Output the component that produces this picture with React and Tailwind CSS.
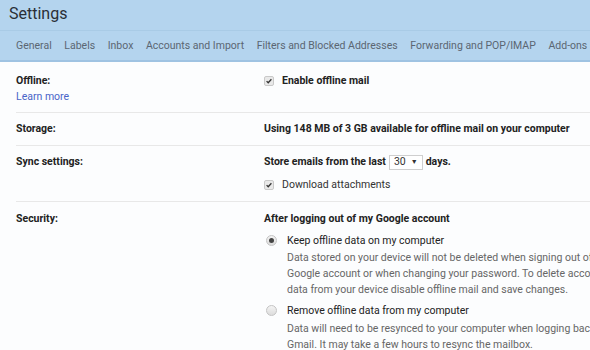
const tabs = [
  'General',
  'Labels',
  'Inbox',
  'Accounts and Import',
  'Filters and Blocked Addresses',
  'Forwarding and POP/IMAP',
  'Add-ons',
];

function Checkbox() {
  return (
    <span className="flex h-[10px] w-[10px] shrink-0 items-center justify-center rounded-[2px] border border-[#c9c9c9] bg-[#e9e9e9]">
      <svg viewBox="0 0 10 10" className="h-[8px] w-[8px]">
        <path d="M2 5.2 L4 7.2 L8 2.8" fill="none" stroke="#333" strokeWidth="1.6" />
      </svg>
    </span>
  );
}

function Radio({ checked }) {
  return (
    <span className="flex h-[11px] w-[11px] shrink-0 items-center justify-center rounded-full border border-[#c4c4c4] bg-gradient-to-b from-[#f4f4f4] to-[#dcdcdc]">
      {checked && <span className="h-[5px] w-[5px] rounded-full bg-[#444]" />}
    </span>
  );
}

function Row({ label, extra, children, className }) {
  return (
    <div className={`flex border-b border-[#e8e8e8] ${className}`}>
      <div className="w-[248px] shrink-0">
        <div className="h-[16px] font-bold text-[#222]">{label}</div>
        {extra}
      </div>
      <div className="flex-1">{children}</div>
    </div>
  );
}

export default function App() {
  return (
    <div className="h-[350px] w-[590px] overflow-hidden bg-[#fcfdfe] font-['Roboto',sans-serif] text-[10.5px] leading-[16px] text-[#222]">
      {/* Header */}
      <div className="bg-[#b4d4ee]">
        <div className="flex h-[31px] items-center pl-[9px] pb-[3px] text-[16px] text-[#2a2f36] border-b border-[#a9cbe6]">
          Settings
        </div>
        <div className="flex h-[31px] items-center gap-[12.6px] whitespace-nowrap pl-[16px] text-[10.5px] text-[#5b6672] border-b-2 border-[#9fc3e2]">
          {tabs.map((t) => (
            <span key={t}>{t}</span>
          ))}
        </div>
      </div>

      {/* Content */}
      <div className="pl-[16px]">
        <Row
          label="Offline:"
          className="pt-[11px] pb-[7px]"
          extra={<div className="h-[16px] text-[#4a64c8]">Learn more</div>}
        >
          <div className="flex h-[16px] items-center gap-[8px] font-bold">
            <Checkbox />
            Enable offline mail
          </div>
        </Row>

        <Row label="Storage:" className="pt-[8px] pb-[8px]">
          <div className="h-[16px] font-bold">
            Using 148 MB of 3 GB available for offline mail on your computer
          </div>
        </Row>

        <Row label="Sync settings:" className="pt-[8px] pb-[8px]">
          <div className="flex h-[16px] items-center gap-[3px] font-bold">
            Store emails from the last
            <span className="flex h-[15px] items-center gap-[5px] border border-[#cfcfcf] bg-white px-[4px] font-normal text-[#333]">
              30
              <span className="text-[7px]">▼</span>
            </span>
            days.
          </div>
          <div className="mt-[7px] flex h-[16px] items-center gap-[8px] text-[#333]">
            <Checkbox />
            Download attachments
          </div>
        </Row>

        <div className="flex pt-[9px]">
          <div className="h-[16px] w-[248px] shrink-0 font-bold">Security:</div>
          <div className="flex-1 whitespace-nowrap">
            <div className="h-[16px] font-bold">After logging out of my Google account</div>
            <div className="mt-[6px] flex gap-[10px] pl-[2px]">
              <div className="pt-[2px]">
                <Radio checked />
              </div>
              <div>
                <div className="text-[#222]">Keep offline data on my computer</div>
                <div className="mt-[1px] text-[#666]">
                  <div>Data stored on your device will not be deleted when signing out of your</div>
                  <div>Google account or when changing your password. To delete account</div>
                  <div>data from your device disable offline mail and save changes.</div>
                </div>
              </div>
            </div>
            <div className="mt-[5px] flex gap-[10px] pl-[2px]">
              <div className="pt-[2px]">
                <Radio />
              </div>
              <div>
                <div className="text-[#222]">Remove offline data from my computer</div>
                <div className="mt-[2px] text-[#666]">
                  <div>Data will need to be resynced to your computer when logging back into</div>
                  <div>Gmail. It may take a few hours to resync the mailbox.</div>
                </div>
              </div>
            </div>
          </div>
        </div>
      </div>
    </div>
  );
}
